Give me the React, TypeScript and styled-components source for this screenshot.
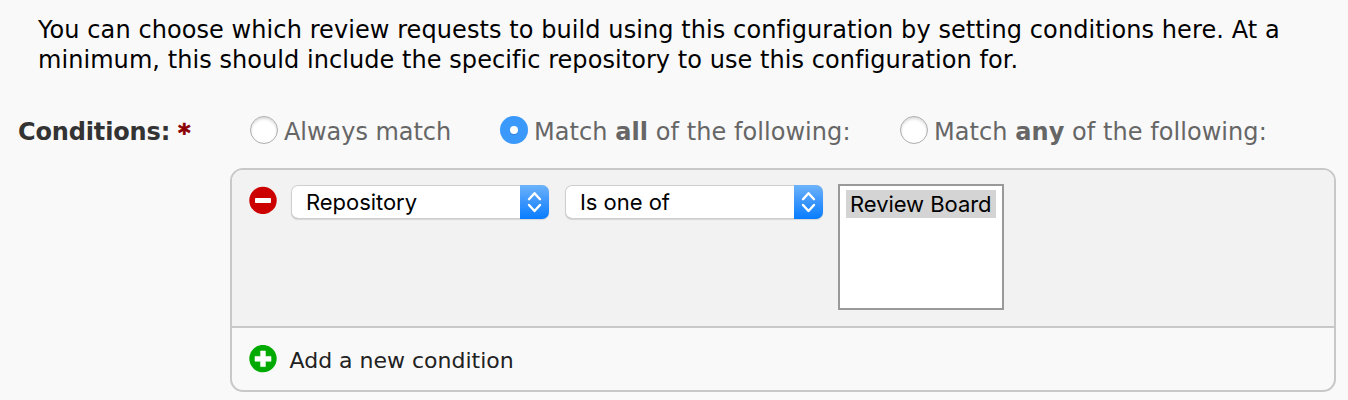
import React from 'react';
import styled, { createGlobalStyle } from 'styled-components';

const Global = createGlobalStyle`
  * { box-sizing: border-box; }
  body { margin: 0; background: #f9f9f9; }
`;

const Page = styled.main`
  width: 1348px;
  height: 400px;
  overflow: hidden;
  background: #f9f9f9;
  font-family: Verdana, 'DejaVu Sans', sans-serif;
  font-size: 24px;
  line-height: 30px;
  font-variant-ligatures: none;
  color: #000;
  padding-top: 15px;
`;

const Intro = styled.p`
  margin: 0 0 0 38px;
  height: 60px;
`;

const Line = styled.span<{ $spacing: number }>`
  display: block;
  width: max-content;
  white-space: nowrap;
  letter-spacing: ${(p) => p.$spacing}px;
`;

const ModeRow = styled.div`
  display: grid;
  grid-template-columns: 232px 250px 400px 1fr;
  grid-template-rows: 28px;
  align-items: center;
  margin: 41px 0 0 18px;
  height: 28px;
`;

const FieldLabel = styled.div`
  display: flex;
  gap: 8px;
  padding-top: 3px;
  font-weight: bold;
  color: #333;
  white-space: nowrap;
  letter-spacing: -0.15px;
`;

const Required = styled.span`
  padding-top: 1px;
  margin-bottom: -1px;
  color: #8b0000;
  -webkit-text-stroke: 0.7px #8b0000;
`;

const Choice = styled.label`
  display: flex;
  align-items: center;
  gap: 6px;
  color: #666;
  white-space: nowrap;
`;

const ChoiceText = styled.span<{ $spacing: number }>`
  padding-top: 3px;
  letter-spacing: ${(p) => p.$spacing}px;
`;

const Radio = styled.span<{ $on?: boolean }>`
  flex: none;
  display: grid;
  place-items: center;
  width: 28px;
  height: 28px;
  border-radius: 50%;
  border: ${(p) => (p.$on ? '0' : '1px solid #adadad')};
  background: ${(p) => (p.$on ? '#3b99fc' : '#fff')};
  box-shadow: ${(p) => (p.$on ? 'none' : 'inset 0 2px 3px rgba(0, 0, 0, 0.14)')};
  &::after {
    content: '';
    width: ${(p) => (p.$on ? '8px' : '0')};
    height: 8px;
    border-radius: 50%;
    background: #fff;
    box-shadow: ${(p) => (p.$on ? '0 1px 1px rgba(0, 0, 0, 0.15)' : 'none')};
  }
`;

const Panel = styled.section`
  margin: 24px 0 0 230px;
  width: 1106px;
  height: 224px;
  border: 2px solid #c8c8c8;
  border-radius: 13px;
  overflow: hidden;
`;

const ConditionRow = styled.div`
  display: flex;
  align-items: flex-start;
  height: 158px;
  padding: 14px 0 0 17px;
  background: #f2f2f2;
  border-bottom: 2px solid #c8c8c8;
`;

const AddRow = styled.div`
  display: flex;
  align-items: center;
  height: 62px;
  padding-left: 17px;
  gap: 12.5px;
  font-size: 22px;
  color: #222;
`;

const AddText = styled(Line)`
  padding-top: 4px;
`;

const Badge = styled.svg<{ $top?: number }>`
  flex: none;
  display: block;
  width: 28px;
  height: 28px;
  margin-top: ${(p) => p.$top ?? 0}px;
`;

const Select = styled.div<{ $gap: number }>`
  flex: none;
  display: flex;
  width: 258px;
  height: 34px;
  margin: 1px 0 0 ${(p) => p.$gap}px;
  border-radius: 7px;
  background: #fff;
  overflow: hidden;
  box-shadow: inset 0 0 0 1px #cfcfcf, inset 0 -1px 0 #b4b4b4, 0 1px 1px rgba(0, 0, 0, 0.12);
`;

const SelectText = styled.span`
  flex: 1;
  padding-left: 15px;
  font-family: Inter, sans-serif;
  font-size: 22px;
  line-height: 34px;
  letter-spacing: -0.04px;
`;

const Stepper = styled.svg`
  width: 29px;
  height: 34px;
  background: linear-gradient(#6db3fa, #3f98fc 45%, #087dff);
`;

const ListBox = styled.div`
  flex: none;
  width: 166px;
  height: 126px;
  margin-left: 15px;
  padding: 4px 6px;
  border: 2px solid #999;
  background: #fff;
`;

const Option = styled.div`
  height: 28px;
  padding-left: 4px;
  background: #d4d4d4;
  font-family: Inter, sans-serif;
  font-size: 22px;
  line-height: 28px;
  letter-spacing: -0.05px;
  white-space: nowrap;
`;

function Dropdown({ text, gap }: { text: string; gap: number }) {
  return (
    <Select $gap={gap}>
      <SelectText>{text}</SelectText>
      <Stepper viewBox="0 0 29 34" fill="none" stroke="#fff" strokeWidth="2.4" strokeLinecap="round" strokeLinejoin="round">
        <path d="M9 14.2 14.5 8.2 20 14.2M9 20 14.5 26 20 20" />
      </Stepper>
    </Select>
  );
}

export default function App() {
  return (
    <>
      <Global />
      <Page>
        <Intro>
          <Line $spacing={0.08}>You can choose which review requests to build using this configuration by setting conditions here. At a</Line>
          <Line $spacing={0.06}>minimum, this should include the specific repository to use this configuration for.</Line>
        </Intro>
        <ModeRow>
          <FieldLabel><span>Conditions:</span><Required>*</Required></FieldLabel>
          <Choice><Radio /><ChoiceText $spacing={-0.05}>Always match</ChoiceText></Choice>
          <Choice><Radio $on /><ChoiceText $spacing={0.06}>Match <b>all</b> of the following:</ChoiceText></Choice>
          <Choice><Radio /><ChoiceText $spacing={0.06}>Match <b>any</b> of the following:</ChoiceText></Choice>
        </ModeRow>
        <Panel>
          <ConditionRow>
            <Badge viewBox="0 0 28 28" $top={2}>
              <circle cx="14" cy="14.4" r="13.7" fill="#c00" />
              <rect x="6" y="12" width="16" height="5" rx="0.8" fill="#fff" />
            </Badge>
            <Dropdown text="Repository" gap={14} />
            <Dropdown text="Is one of" gap={16} />
            <ListBox><Option>Review Board</Option></ListBox>
          </ConditionRow>
          <AddRow>
            <Badge viewBox="0 0 28 28">
              <circle cx="14" cy="13.6" r="13.7" fill="#0a0" />
              <path d="M11.6 6h4.8v5.4H22v4.8h-5.6v5.4h-4.8v-5.4H6v-4.8h5.6z" fill="#fff" stroke="#fff" strokeWidth="0.6" strokeLinejoin="round" />
            </Badge>
            <AddText $spacing={0}>Add a new condition</AddText>
          </AddRow>
        </Panel>
      </Page>
    </>
  );
}
